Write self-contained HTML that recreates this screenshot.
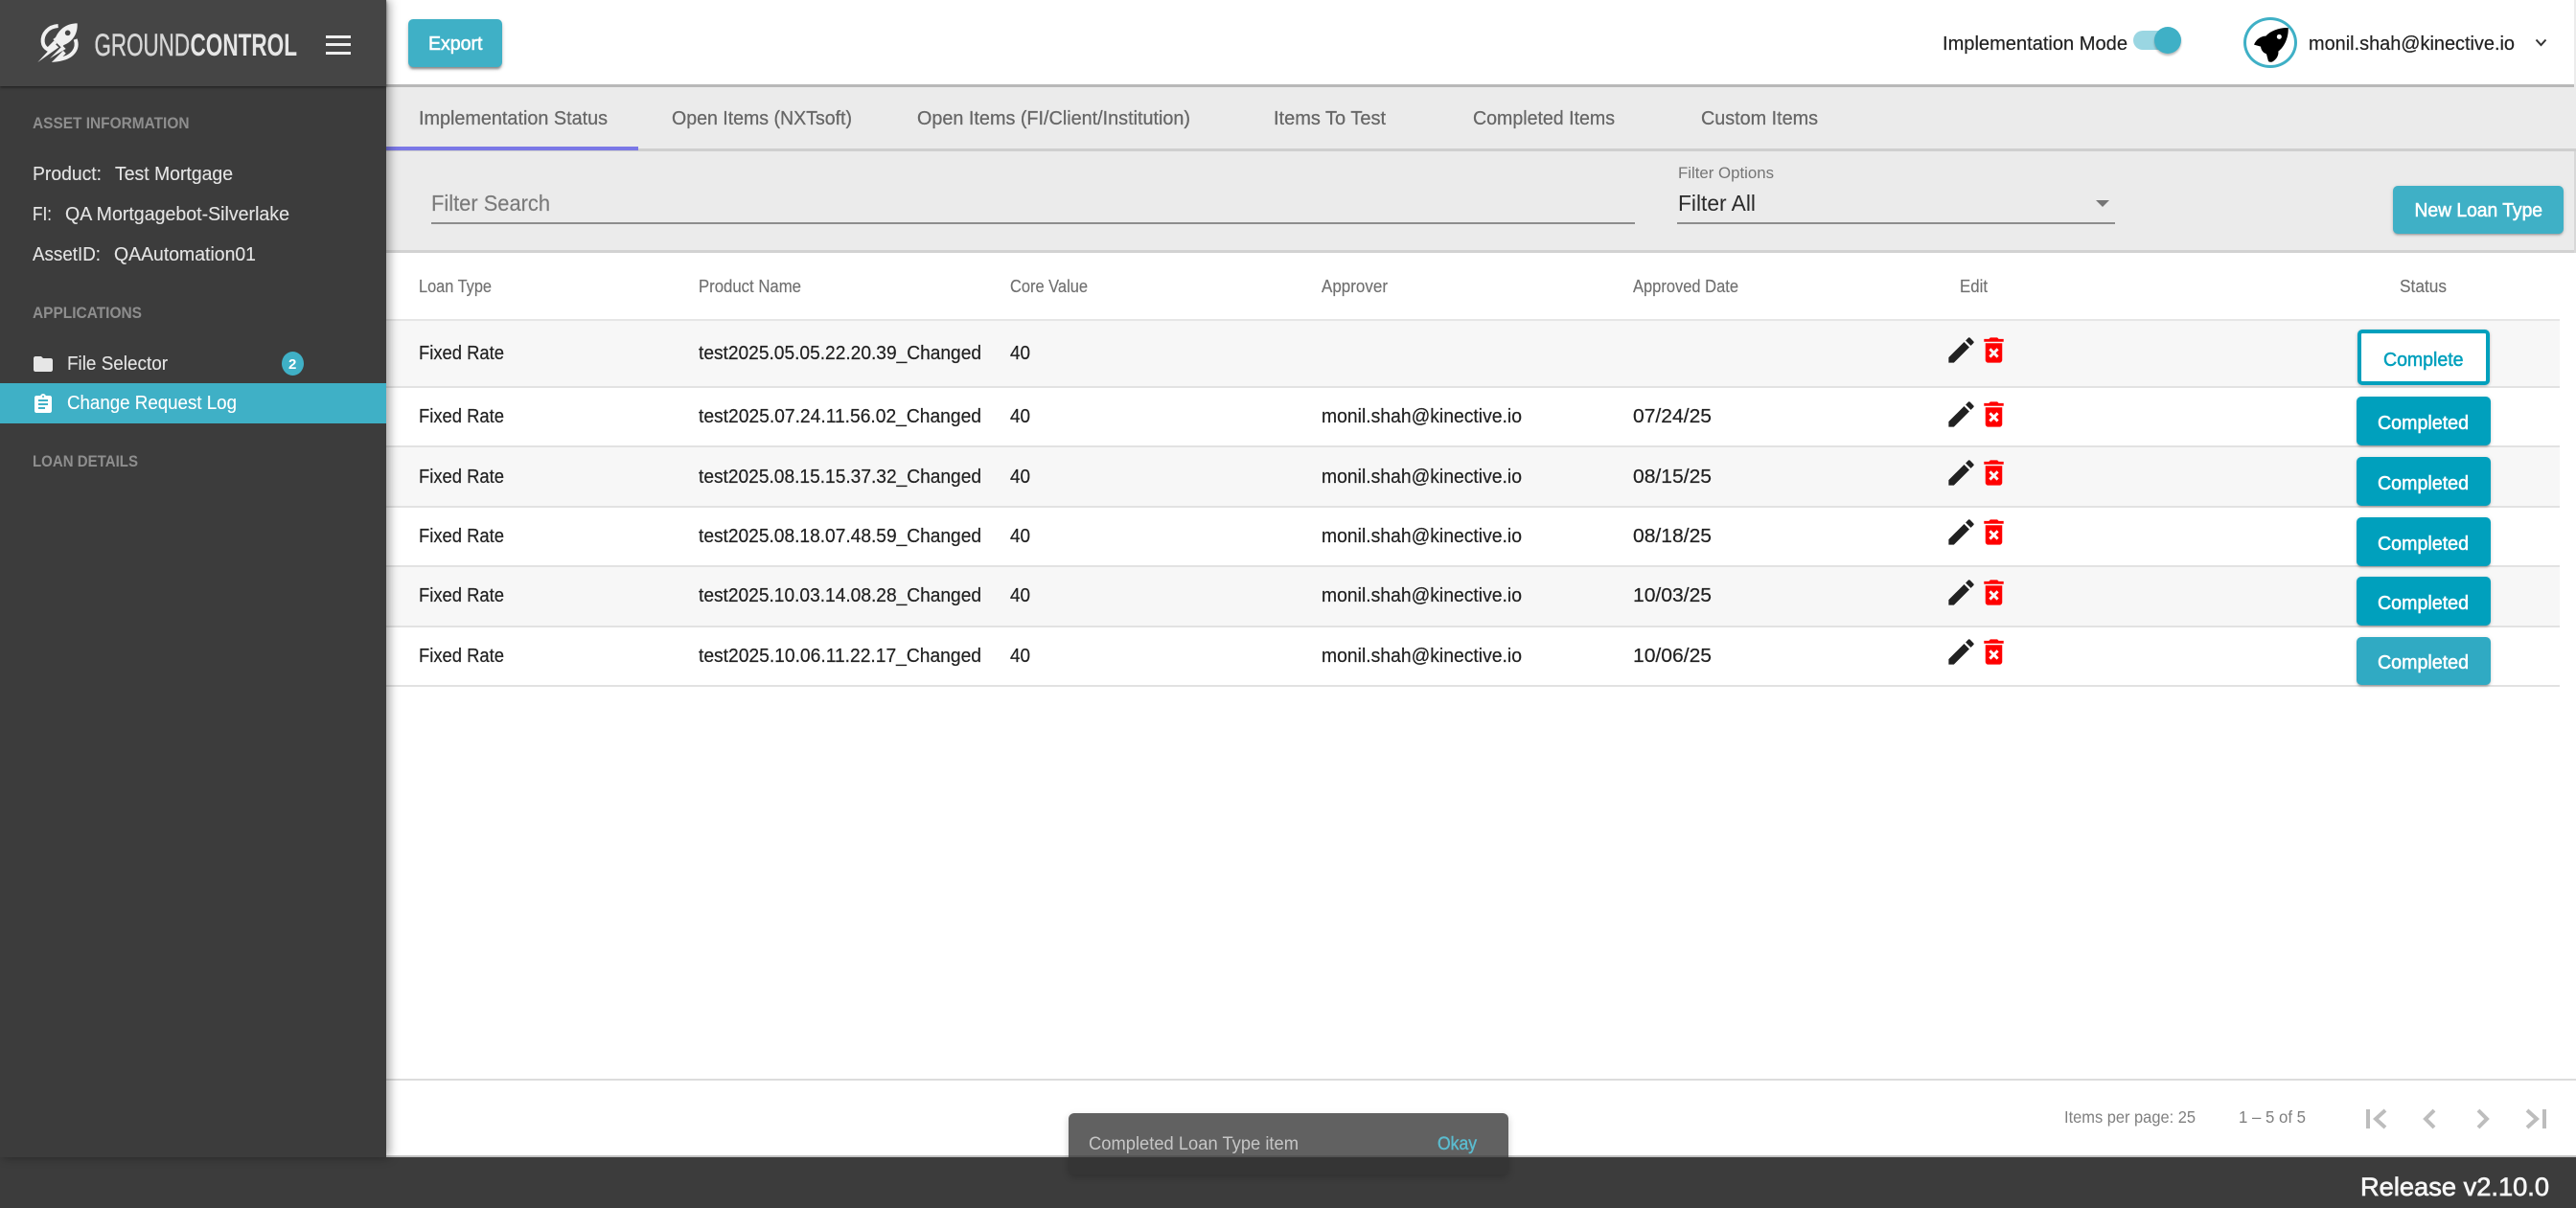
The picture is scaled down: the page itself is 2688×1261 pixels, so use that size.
<!DOCTYPE html>
<html><head><meta charset="utf-8"><title>Ground Control</title>
<style>
html,body{margin:0;padding:0;width:2688px;height:1261px;overflow:hidden;background:#fff;font-family:"Liberation Sans",sans-serif}
div{position:absolute;box-sizing:border-box}
svg{position:absolute;overflow:visible}
text{font-family:"Liberation Sans",sans-serif}
.btn{background:#3fb0c6;border-radius:5px;box-shadow:0 3px 2px -1px rgba(0,0,0,.35),0 2px 4px rgba(0,0,0,.2)}
.st{background:#00a0bd;border-radius:5px;box-shadow:0 2px 2px -1px rgba(0,0,0,.3),0 1px 4px rgba(0,0,0,.15);left:2459px;width:140px;height:51px}
.row{left:403px;width:2268px;border-bottom:2px solid #e2e2e2}
.h{font-size:18px;fill:#707070;stroke:#707070;stroke-width:.15px}
.r{font-size:20px;fill:#212121;stroke:#212121;stroke-width:.2px}
.tab{font-size:20px;fill:#666;stroke:#666;stroke-width:.25px}
.sh{font-size:16.5px;font-weight:bold;fill:#8e8e8e}
.sb{font-size:20px;fill:#e4e4e4;stroke:#e4e4e4;stroke-width:.12px}
.w{font-size:20px;fill:#fff;stroke:#fff;stroke-width:.55px}
.p{font-size:17.5px;fill:#808080}
</style></head><body>
<!-- main surfaces -->
<div style="left:403px;top:0;width:2283px;height:91px;background:#fff;border-bottom:3px solid #b8b8b8"></div>
<div style="left:2686px;top:0;width:2px;height:91px;background:#ececec"></div>
<div style="left:403px;top:91px;width:2285px;height:67px;background:#ebebeb;border-bottom:3px solid #cfcfcf"></div>
<div style="left:403px;top:153px;width:263px;height:4px;background:#7b78e6"></div>
<div style="left:403px;top:158px;width:2285px;height:106px;background:#ebebeb;border-bottom:3px solid #d2d2d2"></div>
<div style="left:2686px;top:158px;width:2px;height:106px;background:#d8d8d8"></div>

<div class="row" style="top:264px;height:71px;background:#fff;border-bottom:2px solid #e6e6e6"></div>
<div class="row" style="top:335px;height:70px;background:#f7f7f7"></div>
<div class="row" style="top:405px;height:62px;background:#fff"></div>
<div class="row" style="top:467px;height:63px;background:#f7f7f7"></div>
<div class="row" style="top:530px;height:62px;background:#fff"></div>
<div class="row" style="top:592px;height:63px;background:#f7f7f7"></div>
<div class="row" style="top:655px;height:62px;background:#fff"></div>

<div style="left:450px;top:232px;width:1256px;height:2px;background:#8c8c8c"></div>
<div style="left:1750px;top:232px;width:457px;height:2px;background:#8c8c8c"></div>
<div style="left:2187px;top:209px;width:0;height:0;border-left:7px solid transparent;border-right:7px solid transparent;border-top:7px solid #757575"></div>

<div class="btn" style="left:426px;top:20px;width:98px;height:50px"></div>
<div class="btn" style="left:2497px;top:194px;width:178px;height:50px;box-shadow:0 2px 2px -1px rgba(0,0,0,.3),0 1px 4px rgba(0,0,0,.15)"></div>

<!-- toggle and avatar -->
<div style="left:2226px;top:32px;width:40px;height:20px;border-radius:10px;background:#9ad6e2"></div>
<div style="left:2248px;top:28px;width:28px;height:28px;border-radius:50%;background:#3fb0c6;box-shadow:0 2px 2px rgba(0,0,0,.28)"></div>
<div style="left:2341px;top:18px;width:56px;height:53px;border-radius:50%;border:3px solid #3fb0c6;background:#fff"></div>
<svg style="left:2320px;top:10px" width="90" height="60" viewBox="0 0 270 180"><path d="M203 57C175 56 148 66 133 83C118 83 103 93 96 110L117 116C118 124 121 130 127 135L135 139L141 162C146 165 150 165 154 163C167 156 174 142 172 131C192 116 205 85 203 57Z" fill="#000"/><circle cx="175" cy="85" r="7.500" fill="#fff"/></svg>
<svg style="left:2644px;top:38px" width="15" height="14" viewBox="0 0 15 14"><path d="M2.500 3.500L7.500 9L12.500 3.500" fill="none" stroke="#333" stroke-width="2"/></svg>

<!-- status buttons -->
<div style="left:2460px;top:344px;width:138px;height:58px;background:#fff;border:4px solid #00a0bd;border-radius:5px;box-shadow:0 1px 3px rgba(0,0,0,.25)"></div>
<div class="st" style="top:414px"></div>
<div class="st" style="top:477px"></div>
<div class="st" style="top:540px"></div>
<div class="st" style="top:602px"></div>
<div class="st" style="top:665px;height:50px;background:#30aac3"></div>

<!-- paginator -->
<div style="left:403px;top:1126px;width:2285px;height:82px;background:#fff;border-top:2px solid #dcdcdc;border-bottom:2px solid #c4c4c4"></div>
<svg style="left:0;top:0" width="2688" height="1261" viewBox="0 0 2688 1261"><g fill="none" stroke="#bdbdbd" stroke-width="4"><path d="M2471 1158V1178M2489 1159L2479 1168L2489 1177M2540 1159L2531 1168L2540 1177M2586 1159L2595 1168L2586 1177M2637 1159L2647 1168L2637 1177M2655 1158V1178"/></g></svg>

<!-- footer -->
<div style="left:0;top:1208px;width:2688px;height:53px;background:#3c3c3c"></div>

<!-- sidebar -->
<div style="left:0;top:0;width:403px;height:1208px;background:#3c3c3c;box-shadow:3px 0 10px rgba(0,0,0,.38)"></div>
<div style="left:0;top:0;width:403px;height:90px;background:#454545;box-shadow:0 1px 3px rgba(0,0,0,.55)"></div>
<div style="left:0;top:400px;width:403px;height:42px;background:#3fb0c6"></div>
<div style="left:294px;top:367px;width:23px;height:25px;border-radius:50%;background:#3fb0c6"></div>
<div style="left:340px;top:37px;width:26px;height:3px;background:#eee"></div>
<div style="left:340px;top:45px;width:26px;height:3px;background:#eee"></div>
<div style="left:340px;top:54px;width:26px;height:3px;background:#eee"></div>

<!-- logo -->
<svg style="left:30px;top:15px" width="100" height="60" viewBox="0 0 300 180">
<g fill="none" stroke="#f0f0f0" stroke-width="12"><path d="M92 36C62 38 42 60 44 86C45 97 50 104 60 110L84 86"/><path d="M146 78C156 106 140 136 88 142L112 118"/></g>
<path d="M152 28C122 28 98 42 84 72L76 78L102 104L110 96C140 84 154 58 152 28Z" fill="#f0f0f0"/>
<circle cx="122" cy="58" r="8.500" fill="#454545"/>
<path d="M28 150L82 92L94 103ZM66 138L106 98L116 108Z" fill="#f0f0f0"/>
</svg>

<!-- icons -->
<svg style="left:33px;top:368px" width="24" height="24" viewBox="0 0 24 24"><path fill="#e6e6e6" d="M10 4H4c-1.100 0-2 .9-2 2v12c0 1.100.9 2 2 2h16c1.100 0 2-.9 2-2V8c0-1.100-.9-2-2-2h-8l-2-2z"/></svg>
<svg style="left:33px;top:410px" width="24" height="24" viewBox="0 0 24 24"><path fill="#fff" d="M19 3h-4.180C14.400 1.840 13.300 1 12 1c-1.300 0-2.400.84-2.820 2H5c-1.100 0-2 .9-2 2v14c0 1.100.9 2 2 2h14c1.100 0 2-.9 2-2V5c0-1.100-.9-2-2-2zm-7 0c.55 0 1 .45 1 1s-.45 1-1 1-1-.45-1-1 .45-1 1-1zm2 14H7v-2h7v2zm3-4H7v-2h10v2zm0-4H7V7h10v2z"/></svg>
<svg width="0" height="0" style="left:0;top:0"><defs>
<path id="pen" fill="#212121" d="M3 17.250V21h3.750L17.810 9.940l-3.750-3.750L3 17.250zM20.710 7.040a1 1 0 0 0 0-1.410l-2.340-2.340a1 1 0 0 0-1.410 0l-1.830 1.830 3.750 3.750 1.830-1.830z"/>
<path id="bin" fill="#f00" d="M6 19c0 1.100.9 2 2 2h8c1.100 0 2-.9 2-2V7H6v12zm2.460-7.120l1.410-1.410L12 12.590l2.120-2.120 1.410 1.410L13.410 14l2.120 2.120-1.410 1.410L12 15.410l-2.120 2.120-1.410-1.410L10.590 14l-2.130-2.120zM15.500 4l-1-1h-5l-1 1H5v2h14V4z"/>
</defs></svg>
<svg style="left:2029px;top:348px" width="35" height="35" viewBox="0 0 24 24"><use href="#pen"/></svg><svg style="left:2063px;top:348px" width="35" height="35" viewBox="0 0 24 24"><use href="#bin"/></svg>
<svg style="left:2029px;top:415px" width="35" height="35" viewBox="0 0 24 24"><use href="#pen"/></svg><svg style="left:2063px;top:415px" width="35" height="35" viewBox="0 0 24 24"><use href="#bin"/></svg>
<svg style="left:2029px;top:476px" width="35" height="35" viewBox="0 0 24 24"><use href="#pen"/></svg><svg style="left:2063px;top:476px" width="35" height="35" viewBox="0 0 24 24"><use href="#bin"/></svg>
<svg style="left:2029px;top:538px" width="35" height="35" viewBox="0 0 24 24"><use href="#pen"/></svg><svg style="left:2063px;top:538px" width="35" height="35" viewBox="0 0 24 24"><use href="#bin"/></svg>
<svg style="left:2029px;top:601px" width="35" height="35" viewBox="0 0 24 24"><use href="#pen"/></svg><svg style="left:2063px;top:601px" width="35" height="35" viewBox="0 0 24 24"><use href="#bin"/></svg>
<svg style="left:2029px;top:663px" width="35" height="35" viewBox="0 0 24 24"><use href="#pen"/></svg><svg style="left:2063px;top:663px" width="35" height="35" viewBox="0 0 24 24"><use href="#bin"/></svg>

<!-- snackbar -->
<div style="left:1115px;top:1162px;width:459px;height:64px;border-radius:6px;background:rgba(51,51,51,.775);box-shadow:0 3px 8px rgba(0,0,0,.2)"></div>

<!-- all text -->
<svg style="left:0;top:0" width="2688" height="1261" viewBox="0 0 2688 1261">
<text x="98.500" y="58" font-size="32" fill="#d6d6d6" stroke="#d6d6d6" stroke-width=".5" textLength="99.500" lengthAdjust="spacingAndGlyphs">GROUND</text>
<text x="198.500" y="58" font-size="32" font-weight="bold" fill="#e6e6e6" textLength="111.500" lengthAdjust="spacingAndGlyphs">CONTROL</text>
<text class="sh" x="34" y="134" textLength="163.500" lengthAdjust="spacingAndGlyphs">ASSET INFORMATION</text>
<text class="sb" x="34" y="188" textLength="72" lengthAdjust="spacingAndGlyphs">Product:</text>
<text class="sb" x="120" y="188" textLength="123" lengthAdjust="spacingAndGlyphs">Test Mortgage</text>
<text class="sb" x="34" y="230" textLength="20" lengthAdjust="spacingAndGlyphs">FI:</text>
<text class="sb" x="68" y="230" textLength="234" lengthAdjust="spacingAndGlyphs">QA Mortgagebot-Silverlake</text>
<text class="sb" x="34" y="272" textLength="71" lengthAdjust="spacingAndGlyphs">AssetID:</text>
<text class="sb" x="119" y="272" textLength="148" lengthAdjust="spacingAndGlyphs">QAAutomation01</text>
<text class="sh" x="34" y="332" textLength="114" lengthAdjust="spacingAndGlyphs">APPLICATIONS</text>
<text class="sb" x="70" y="386" textLength="105" lengthAdjust="spacingAndGlyphs">File Selector</text>
<text x="301" y="385" font-size="15" font-weight="bold" fill="#fff">2</text>
<text class="sb" x="70" y="427" textLength="177" lengthAdjust="spacingAndGlyphs" style="fill:#fff;stroke:#fff">Change Request Log</text>
<text class="sh" x="34" y="487" textLength="110" lengthAdjust="spacingAndGlyphs">LOAN DETAILS</text>

<text class="w" x="447" y="52" textLength="56.500" lengthAdjust="spacingAndGlyphs">Export</text>
<text x="2027" y="52" font-size="20" fill="#222" stroke="#222" stroke-width=".2" textLength="193" lengthAdjust="spacingAndGlyphs">Implementation Mode</text>
<text x="2409" y="52" font-size="20" fill="#222" stroke="#222" stroke-width=".2" textLength="215" lengthAdjust="spacingAndGlyphs">monil.shah@kinective.io</text>

<text class="tab" x="437" y="130" textLength="197" lengthAdjust="spacingAndGlyphs">Implementation Status</text>
<text class="tab" x="701" y="130" textLength="188" lengthAdjust="spacingAndGlyphs">Open Items (NXTsoft)</text>
<text class="tab" x="957" y="130" textLength="285" lengthAdjust="spacingAndGlyphs">Open Items (FI/Client/Institution)</text>
<text class="tab" x="1329" y="130" textLength="117" lengthAdjust="spacingAndGlyphs">Items To Test</text>
<text class="tab" x="1537" y="130" textLength="148" lengthAdjust="spacingAndGlyphs">Completed Items</text>
<text class="tab" x="1775" y="130" textLength="122" lengthAdjust="spacingAndGlyphs">Custom Items</text>

<text x="450" y="220" font-size="23" fill="#7a7a7a" stroke="#7a7a7a" stroke-width=".15" textLength="124" lengthAdjust="spacingAndGlyphs">Filter Search</text>
<text x="1751" y="186" font-size="17" fill="#757575" textLength="100" lengthAdjust="spacingAndGlyphs">Filter Options</text>
<text x="1751" y="220" font-size="23" fill="#2a2a2a" textLength="81" lengthAdjust="spacingAndGlyphs">Filter All</text>
<text class="w" x="2519.500" y="226" textLength="133.500" lengthAdjust="spacingAndGlyphs">New Loan Type</text>

<text class="h" x="437" y="305" textLength="76" lengthAdjust="spacingAndGlyphs">Loan Type</text>
<text class="h" x="729" y="305" textLength="107" lengthAdjust="spacingAndGlyphs">Product Name</text>
<text class="h" x="1054" y="305" textLength="81" lengthAdjust="spacingAndGlyphs">Core Value</text>
<text class="h" x="1379" y="305" textLength="69" lengthAdjust="spacingAndGlyphs">Approver</text>
<text class="h" x="1704" y="305" textLength="110" lengthAdjust="spacingAndGlyphs">Approved Date</text>
<text class="h" x="2045" y="305" textLength="29" lengthAdjust="spacingAndGlyphs">Edit</text>
<text class="h" x="2504" y="305" textLength="49" lengthAdjust="spacingAndGlyphs">Status</text>

<text class="r" x="437" y="375" textLength="89" lengthAdjust="spacingAndGlyphs">Fixed Rate</text>
<text class="r" x="729" y="375" textLength="295" lengthAdjust="spacingAndGlyphs">test2025.05.05.22.20.39_Changed</text>
<text class="r" x="1054" y="375" textLength="21" lengthAdjust="spacingAndGlyphs">40</text>

<text class="r" x="437" y="441" textLength="89" lengthAdjust="spacingAndGlyphs">Fixed Rate</text>
<text class="r" x="729" y="441" textLength="295" lengthAdjust="spacingAndGlyphs">test2025.07.24.11.56.02_Changed</text>
<text class="r" x="1054" y="441" textLength="21" lengthAdjust="spacingAndGlyphs">40</text>
<text class="r" x="1379" y="441" textLength="209" lengthAdjust="spacingAndGlyphs">monil.shah@kinective.io</text>
<text class="r" x="1704" y="441" textLength="82" lengthAdjust="spacingAndGlyphs">07/24/25</text>

<text class="r" x="437" y="504" textLength="89" lengthAdjust="spacingAndGlyphs">Fixed Rate</text>
<text class="r" x="729" y="504" textLength="295" lengthAdjust="spacingAndGlyphs">test2025.08.15.15.37.32_Changed</text>
<text class="r" x="1054" y="504" textLength="21" lengthAdjust="spacingAndGlyphs">40</text>
<text class="r" x="1379" y="504" textLength="209" lengthAdjust="spacingAndGlyphs">monil.shah@kinective.io</text>
<text class="r" x="1704" y="504" textLength="82" lengthAdjust="spacingAndGlyphs">08/15/25</text>

<text class="r" x="437" y="566" textLength="89" lengthAdjust="spacingAndGlyphs">Fixed Rate</text>
<text class="r" x="729" y="566" textLength="295" lengthAdjust="spacingAndGlyphs">test2025.08.18.07.48.59_Changed</text>
<text class="r" x="1054" y="566" textLength="21" lengthAdjust="spacingAndGlyphs">40</text>
<text class="r" x="1379" y="566" textLength="209" lengthAdjust="spacingAndGlyphs">monil.shah@kinective.io</text>
<text class="r" x="1704" y="566" textLength="82" lengthAdjust="spacingAndGlyphs">08/18/25</text>

<text class="r" x="437" y="628" textLength="89" lengthAdjust="spacingAndGlyphs">Fixed Rate</text>
<text class="r" x="729" y="628" textLength="295" lengthAdjust="spacingAndGlyphs">test2025.10.03.14.08.28_Changed</text>
<text class="r" x="1054" y="628" textLength="21" lengthAdjust="spacingAndGlyphs">40</text>
<text class="r" x="1379" y="628" textLength="209" lengthAdjust="spacingAndGlyphs">monil.shah@kinective.io</text>
<text class="r" x="1704" y="628" textLength="82" lengthAdjust="spacingAndGlyphs">10/03/25</text>

<text class="r" x="437" y="691" textLength="89" lengthAdjust="spacingAndGlyphs">Fixed Rate</text>
<text class="r" x="729" y="691" textLength="295" lengthAdjust="spacingAndGlyphs">test2025.10.06.11.22.17_Changed</text>
<text class="r" x="1054" y="691" textLength="21" lengthAdjust="spacingAndGlyphs">40</text>
<text class="r" x="1379" y="691" textLength="209" lengthAdjust="spacingAndGlyphs">monil.shah@kinective.io</text>
<text class="r" x="1704" y="691" textLength="82" lengthAdjust="spacingAndGlyphs">10/06/25</text>

<text x="2487" y="382" font-size="20" fill="#00a0bd" stroke="#00a0bd" stroke-width=".5" textLength="83.500" lengthAdjust="spacingAndGlyphs">Complete</text>
<text class="w" x="2481" y="448" textLength="95" lengthAdjust="spacingAndGlyphs">Completed</text>
<text class="w" x="2481" y="511" textLength="95" lengthAdjust="spacingAndGlyphs">Completed</text>
<text class="w" x="2481" y="574" textLength="95" lengthAdjust="spacingAndGlyphs">Completed</text>
<text class="w" x="2481" y="636" textLength="95" lengthAdjust="spacingAndGlyphs">Completed</text>
<text class="w" x="2481" y="698" textLength="95" lengthAdjust="spacingAndGlyphs">Completed</text>

<text class="p" x="2154" y="1172" textLength="137" lengthAdjust="spacingAndGlyphs">Items per page: 25</text>
<text class="p" x="2336" y="1172" textLength="70" lengthAdjust="spacingAndGlyphs">1 – 5 of 5</text>
<text x="1136" y="1200" font-size="19" fill="#c6c6c6" textLength="219" lengthAdjust="spacingAndGlyphs">Completed Loan Type item</text>
<text x="1500" y="1200" font-size="19" fill="#5bbccf" stroke="#5bbccf" stroke-width=".4" textLength="41" lengthAdjust="spacingAndGlyphs">Okay</text>
<text x="2463" y="1248" font-size="27" fill="#f6f6f6" stroke="#f6f6f6" stroke-width=".7" textLength="197" lengthAdjust="spacingAndGlyphs">Release v2.10.0</text>
</svg>
</body></html>
